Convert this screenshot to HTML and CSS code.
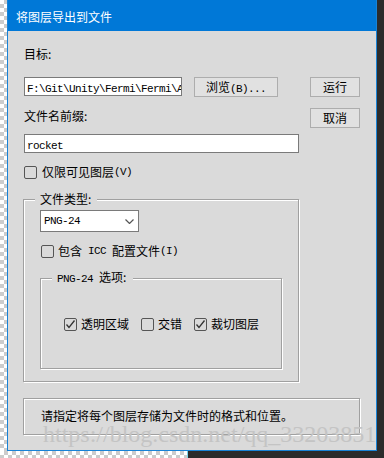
FILE: index.html
```html
<!DOCTYPE html>
<html lang="zh-CN">
<head>
<meta charset="utf-8">
<title>将图层导出到文件</title>
<link rel="stylesheet" href="styles.css">
</head>
<body>
<div class="top">
  <div class="checker strip-left"></div>
  <div class="window">
    <div class="titlebar">将图层导出到文件</div>
    <div class="content">
      <div class="label row-target">目标:</div>
      <div class="row row-path">
        <div class="field path"><span class="m">F:\Git\Unity\Fermi\Fermi\Assets</span></div>
        <button class="btn browse">浏览<span class="m">(B)...</span></button>
        <button class="btn side">运行</button>
      </div>
      <div class="row row-prefix">
        <div class="label">文件名前缀:</div>
        <button class="btn side">取消</button>
      </div>
      <div class="field rocket"><span class="m">rocket</span></div>
      <div class="check row-visible"><span class="box"></span>仅限可见图层<span class="m">(V)</span></div>
      <fieldset class="group outer">
        <legend class="legend-outer">文件类型:</legend>
        <div class="select"><span class="m">PNG-24</span><svg class="chev" width="9" height="5" viewBox="0 0 9 5"><polyline points="0.5,0.5 4.5,4.5 8.5,0.5" fill="none" stroke="#555" stroke-width="1.2"/></svg></div>
        <div class="check icc"><span class="box"></span>包含<span class="m">&nbsp;ICC&nbsp;</span>配置文件<span class="m">(I)</span></div>
        <fieldset class="group inner">
          <legend class="legend-inner"><span class="m">PNG-24&nbsp;</span>选项:</legend>
          <div class="checks">
            <div class="check"><span class="box"><svg width="11" height="11" viewBox="0 0 11 11"><polyline points="1.5,5.5 4,8.5 9.5,1.5" fill="none" stroke="#333" stroke-width="1.3"/></svg></span>透明区域</div>
            <div class="check"><span class="box"></span>交错</div>
            <div class="check"><span class="box"><svg width="11" height="11" viewBox="0 0 11 11"><polyline points="1.5,5.5 4,8.5 9.5,1.5" fill="none" stroke="#333" stroke-width="1.3"/></svg></span>裁切图层</div>
          </div>
        </fieldset>
      </fieldset>
      <div class="hint">请指定将每个图层存储为文件时的格式和位置。</div>
    </div>
    <div class="watermark">https://blog.csdn.net/qq_33203851</div>
  </div>
</div>
<div class="bottom">
  <div class="checker strip-bottom"></div>
  <div class="cyan"></div>
</div>
</body>
</html>
```

FILE: styles.css
```css
* { box-sizing: border-box; }
html, body { margin: 0; padding: 0; }
body {
  width: 384px;
  height: 458px;
  overflow: hidden;
  background: #2b2b2b;
  font-family: "Noto Sans CJK SC", "Microsoft YaHei", sans-serif;
  font-size: 12px;
  line-height: 16px;
  color: #000;
}
.checker {
  background-color: #fff;
  background-image: conic-gradient(#cccccc 25%, #ffffff 0 50%, #cccccc 0 75%, #ffffff 0);
  background-size: 8px 8px;
}
.top { display: flex; height: 451px; }
.strip-left { width: 7px; }
.window {
  width: 370px;
  position: relative;
  display: flex;
  flex-direction: column;
  border: 1px solid #1883d7;
  border-top: 0;
  background: #dadada;
}
.titlebar {
  height: 31px;
  background: #0078d7;
  color: #fff;
  padding: 9px 0 0 8px;
}
.content {
  flex: 1;
  display: flex;
  flex-direction: column;
  align-items: flex-start;
  padding: 15px 16px 0 16px;
}
.m {
  font-family: "Liberation Mono", monospace;
  font-size: 11px;
  letter-spacing: -0.6px;
}
.row { display: flex; align-items: flex-start; width: 100%; }
.row-path { margin-top: 15px; gap: 12px; }
.row-prefix { margin-top: 11px; }
.field {
  background: #fff;
  border: 1px solid #7a7a7a;
  height: 19px;
  padding: 0 2px;
  overflow: hidden;
  white-space: nowrap;
  line-height: 17px;
}
.path { width: 158px; }
.rocket { width: 275px; margin-top: 6px; }
.btn {
  height: 20px;
  background: #e1e1e1;
  border: 1px solid #adadad;
  font: inherit;
  line-height: 18px;
  padding: 0;
  color: #000;
  white-space: nowrap;
}
.browse { width: 84px; }
.side { width: 50px; margin-left: auto; }
.check { display: flex; align-items: center; height: 16px; white-space: nowrap; }
.box {
  width: 13px;
  height: 13px;
  border: 1px solid #555;
  border-radius: 2px;
  margin-right: 4px;
  display: flex;
  align-items: center;
  justify-content: center;
}
.row-visible { margin-top: 11px; }
.row-visible .box { margin-right: 5px; }
.group {
  margin: 0;
  min-width: 0;
  border: 1px solid #a0a0a0;
  box-shadow: inset 1px 1px 0 #fff, 1px 1px 0 #fff;
}
.group legend { background: #dadada; line-height: 14px; }
.outer {
  margin-top: 12px;
  margin-left: -1px;
  width: 276px;
  padding: 0 0 12px 16px;
}
.legend-outer { margin-left: -5px; padding: 0 6px 0 5px; }
.select {
  margin-top: 4px;
  width: 99px;
  height: 22px;
  background: #fff;
  border: 1px solid #7a7a7a;
  display: flex;
  align-items: center;
  justify-content: space-between;
  padding: 0 4px 0 3px;
}
.icc { margin-top: 11px; margin-left: 1px; }
.inner {
  margin-top: 11px;
  width: 242px;
  padding: 30px 0 36px 23px;
}
.legend-inner { margin-left: -12px; padding: 0 7px 0 5px; }
.checks { display: flex; gap: 12px; }
.hint {
  margin-top: 16px;
  margin-left: -1px;
  width: 337px;
  height: 37px;
  border: 1px solid #a0a0a0;
  box-shadow: inset 1px 1px 0 #fff, 1px 1px 0 #fff;
  padding: 9px 0 0 17px;
}
.watermark {
  position: absolute;
  left: 35px;
  top: 422px;
  font-family: "Liberation Serif", serif;
  font-size: 24px;
  line-height: 1;
  color: #c4c4c4;
  pointer-events: none;
  white-space: nowrap;
}
.bottom { display: flex; height: 7px; }
.strip-bottom { width: 187px; }
.cyan { width: 1px; background: #7fd6ea; }
```
